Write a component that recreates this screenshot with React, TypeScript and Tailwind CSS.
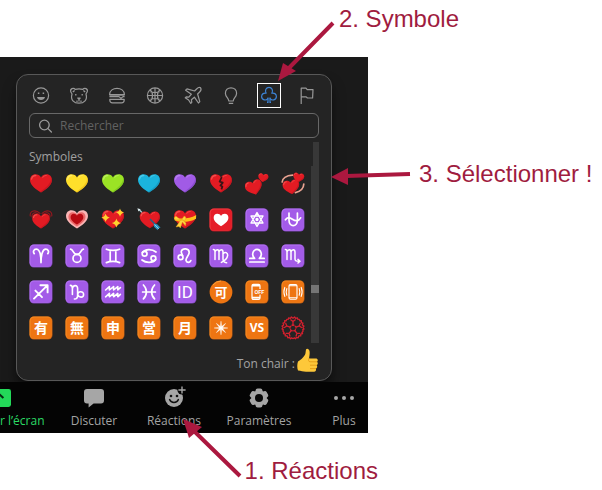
import type { ReactNode } from "react";

const HEART =
  "M12 20.6C8 17.8 1 13.8 1 8C1 4.6 3.3 2.2 6.4 2.2C8.8 2.2 11 3.4 12 5.4C13 3.4 15.2 2.2 17.6 2.2C20.7 2.2 23 4.6 23 8C23 13.8 16 17.8 12 20.6Z";

type Item = { name: string; art: ReactNode };

function Heart({ fill, shade, shine }: { fill: string; shade: string; shine: string }) {
  return (
    <g>
      <path d={HEART} fill={fill} />
      <path d="M12 20.6C16 17.8 23 13.8 23 8C23 7 22.8 6 22.4 5.2C22 12 16.6 16 10.8 19.8Z" fill={shade} opacity="0.6" />
      <path d="M2.6 7C3 4.8 4.6 3.5 6.8 3.5" fill="none" stroke={shine} strokeWidth="1.3" strokeLinecap="round" opacity="0.55" />
      <path d="M13.8 5.4C14.5 4.2 15.6 3.6 17.2 3.5" fill="none" stroke={shine} strokeWidth="1" strokeLinecap="round" opacity="0.5" />
    </g>
  );
}

const RED = { fill: "#e31b23", shade: "#b81420", shine: "#ff7a70" };

function Tile({ tone, children }: { tone: "purple" | "orange" | "red"; children: ReactNode }) {
  const c = {
    purple: { base: "#a35be8", low: "#7d45b8", high: "#b273f0" },
    orange: { base: "#ee7512", low: "#b95a14", high: "#f38a20" },
    red: { base: "#e51d28", low: "#ac1822", high: "#f03a40" },
  }[tone];
  return (
    <g>
      <rect x="0.5" y="0.5" width="23" height="23" rx="4.4" fill={c.low} />
      <rect x="0.5" y="0.5" width="22.2" height="22.2" rx="4.4" fill={c.high} />
      <rect x="1.6" y="1.5" width="21" height="21" rx="3.6" fill={c.base} />
      {children}
    </g>
  );
}

function Sign({ children }: { children: ReactNode }) {
  return (
    <Tile tone="purple">
      <g fill="none" stroke="#fff" strokeWidth="1.7" strokeLinecap="round" strokeLinejoin="round">
        {children}
      </g>
    </Tile>
  );
}

function Kanji({ children }: { children: string }) {
  return (
    <Tile tone="orange">
      <text x="12" y="17" textAnchor="middle" fontSize="14" fontWeight="700" fill="#fff" className="font-['Noto_Sans_CJK_JP',sans-serif]">
        {children}
      </text>
    </Tile>
  );
}

const star = (x: number, y: number, r: number) => (
  <path
    d={`M${x} ${y - r}Q${x + r * 0.2} ${y - r * 0.2} ${x + r} ${y}Q${x + r * 0.2} ${y + r * 0.2} ${x} ${y + r}Q${x - r * 0.2} ${y + r * 0.2} ${x - r} ${y}Q${x - r * 0.2} ${y - r * 0.2} ${x} ${y - r}Z`}
    fill="#ffd22e"
  />
);

const emojis: Item[] = [
  { name: "Cœur rouge", art: <Heart {...RED} /> },
  { name: "Cœur jaune", art: <Heart fill="#ffdf2b" shade="#eab414" shine="#fff4a0" /> },
  { name: "Cœur vert", art: <Heart fill="#9be325" shade="#72bd1c" shine="#d3f78b" /> },
  { name: "Cœur bleu", art: <Heart fill="#1bb4dc" shade="#138db8" shine="#76dcf2" /> },
  { name: "Cœur violet", art: <Heart fill="#a15be6" shade="#7d42c2" shine="#cb9cfa" /> },
  {
    name: "Cœur brisé",
    art: (
      <g>
        <Heart {...RED} />
        <path d="M12.8 5L10.6 9.6L13.8 10.6L11.4 13.6L13.4 14.6L12.4 17.4" fill="none" stroke="#3a1517" strokeWidth="1.7" strokeLinejoin="round" />
      </g>
    ),
  },
  {
    name: "Deux cœurs",
    art: (
      <g>
        <g transform="translate(-0.6 7.2) rotate(-17 8 8) scale(0.78)"><Heart {...RED} /></g>
        <g transform="translate(12.6 0.5) rotate(10 5 5) scale(0.46)"><Heart {...RED} /></g>
      </g>
    ),
  },
  {
    name: "Cœurs tournants",
    art: (
      <g>
        <path d="M11.6 3.2C5 3.4 1.2 6.6 1.2 10M22.8 12C22.6 16.4 19 19.6 14.4 20.6" fill="none" stroke="#e9a392" strokeWidth="1.7" strokeLinecap="round" />
        <g transform="translate(1 6.6) rotate(-8 8 8) scale(0.76)"><Heart {...RED} /></g>
        <g transform="translate(11.6 -0.2) rotate(10 5 5) scale(0.5)"><Heart {...RED} /></g>
      </g>
    ),
  },
  {
    name: "Cœur battant",
    art: (
      <g>
        <path d="M1.2 8C.6 2.6 6.6 1 11 5.4M22.8 8C23.4 2.6 17.4 1 13 5.4M3 9C2.6 4.8 6.4 3.4 10 6.4M21 9C21.4 4.8 17.6 3.4 14 6.4" fill="none" stroke="#97161e" strokeWidth="1.1" strokeLinecap="round" />
        <g transform="translate(2.4 4) scale(0.8)"><Heart {...RED} /></g>
      </g>
    ),
  },
  {
    name: "Cœur grandissant",
    art: (
      <g>
        <path d={HEART} fill="#fbb5b5" />
        <g transform="translate(2.6 2.5) scale(0.78)"><path d={HEART} fill="#ee6a6a" /></g>
        <g transform="translate(5 4.5) scale(0.58)"><path d={HEART} fill="#b90a12" /></g>
      </g>
    ),
  },
  {
    name: "Cœur étincelant",
    art: (
      <g>
        <Heart {...RED} />
        {star(19, 4.6, 4.2)}
        {star(4.6, 9.8, 4.2)}
        {star(15.4, 15, 4.6)}
      </g>
    ),
  },
  {
    name: "Cœur fléché",
    art: (
      <g>
        <path d="M2 1.6L7 6.6" stroke="#a9cdd5" strokeWidth="1.4" />
        <path d="M.4 .2L3.6 1.2L1.4 3.4Z" fill="#dcebee" />
        <g transform="translate(1.8 1.4) scale(0.92)"><Heart {...RED} /></g>
        <path d="M13 11L20 18" stroke="#236486" strokeWidth="1.5" />
        <path d="M16.6 15.8L17 18.8L20.8 22.2L21 20L23.6 19.8L20.2 16.2Z" fill="#2795c4" />
        <path d="M17.6 16.6L22 21" stroke="#a6e0ee" strokeWidth="0.8" />
      </g>
    ),
  },
  {
    name: "Cœur avec ruban",
    art: (
      <g>
        <Heart {...RED} />
        <path d="M.8 9.4C6 11 16 11.4 23.2 7L23 10.8C17 14.6 7 14.4 1.8 12.6Z" fill="#ffc21a" />
        <path d="M7.6 11.8L3.4 8.4C1.4 7.8 1 10 2.4 12ZM8.6 11.8L11 8.2C13 8 13.4 10.4 12 12.4ZM7.4 12.4L3 19L6 18.4L7.4 20L9.4 14L12.4 18L13 15L9.6 12Z" fill="#ffd53d" stroke="#e09a12" strokeWidth="0.4" />
      </g>
    ),
  },
  {
    name: "Décoration cœur",
    art: (
      <Tile tone="red">
        <g transform="translate(4 4.4) scale(0.67)"><path d={HEART} fill="#fff" /></g>
      </Tile>
    ),
  },
  {
    name: "Étoile à six branches",
    art: (
      <Sign>
        <path d="M12 4.6L18 15H6ZM12 18.4L6 8H18Z" strokeWidth="1.4" />
        <circle cx="12" cy="11.5" r="0.8" />
      </Sign>
    ),
  },
  { name: "Serpentaire", art: <Sign><path d="M8 5V12C8 19.4 16.4 19.4 16.4 12V5M4.4 11.8C6.6 8.4 8.8 9.4 11.4 11.2C14.6 13.4 17.6 13.4 19.6 9.8" /></Sign> },
  { name: "Bélier", art: <Sign><path d="M5.2 9.6C3.6 7.6 5 5.2 7.2 5.2C10.4 5.2 12 11 12 18.6C12 11 13.6 5.2 16.8 5.2C19 5.2 20.4 7.6 18.8 9.6" /></Sign> },
  { name: "Taureau", art: <Sign><circle cx="12" cy="14.4" r="4" /><path d="M5.6 5.2C8.4 5.4 7.8 10.4 12 10.4C16.2 10.4 15.6 5.4 18.4 5.2" /></Sign> },
  { name: "Gémeaux", art: <Sign><path d="M5.4 5.2C9 6.8 15 6.8 18.6 5.2M5.4 18.6C9 17 15 17 18.6 18.6M9.2 6.6V17.2M14.8 6.6V17.2" /></Sign> },
  { name: "Cancer", art: <Sign><circle cx="7.6" cy="9.8" r="2.4" /><circle cx="16.4" cy="14.2" r="2.4" /><path d="M5.4 8.6C8 4.8 15 4.8 19 8M18.6 15.4C16 19.2 9 19.2 5 16" /></Sign> },
  { name: "Lion", art: <Sign><circle cx="7.6" cy="13.2" r="2.4" /><path d="M9.6 12C9.2 9.8 7.8 9 8.4 7C9.6 3.8 16 4 16.2 8.2C16.2 11.6 12.6 13.4 13 16.4C13.4 19 16.8 18.8 17.8 16.6" /></Sign> },
  { name: "Vierge", art: <Sign><path d="M4.4 5.6C5.8 5.6 6 6.4 6 7.8V15.6M6 7.8C6.8 5 10 5 10 8V15.6M10 7.8C10.8 5 14 5 14 8V15C14 17 15.4 18.4 17.6 18.8M14 9.8C16 7.2 19 8.8 18.6 11.6C18.2 14.6 15.4 16.8 12.4 18.4" strokeWidth="1.5" /></Sign> },
  { name: "Balance", art: <Sign><path d="M4.8 18H19.2M4.8 14.4H9.6C6 11 8 5.4 12 5.4C16 5.4 18 11 14.4 14.4H19.2" /></Sign> },
  { name: "Scorpion", art: <Sign><path d="M4.4 5.6C5.8 5.6 6 6.4 6 7.8V15.6M6 7.8C6.8 5 10 5 10 8V15.6M10 7.8C10.8 5 14 5 14 8V15C14 16.8 15.2 17.4 18.6 17.2M17 15.4L19 17.2L17 19" strokeWidth="1.5" /></Sign> },
  { name: "Sagittaire", art: <Sign><path d="M5 18.6L18.4 5.4M11.4 5.2H18.6V12.4M6.4 10.6L13 17.2" strokeWidth="1.9" /></Sign> },
  { name: "Capricorne", art: <Sign><path d="M5.4 5.4C7.2 5.4 7.4 7 7.4 8.6V14.4M7.4 8.6C8 4.8 12.6 4.4 12.6 8.6V15.4C12.6 17.8 11.4 19 9.4 19M12.6 14.6C12.8 10.8 18.6 10.8 18.6 14.4C18.6 18 13.8 18 12.6 14.6" strokeWidth="1.6" /></Sign> },
  { name: "Verseau", art: <Sign><path d="M4.6 10L8.4 6.6V10L12.6 6.6V10L16.8 6.6V10L19.4 7.6M4.6 16.8L8.4 13.4V16.8L12.6 13.4V16.8L16.8 13.4V16.8L19.4 14.4" strokeWidth="1.6" /></Sign> },
  { name: "Poissons", art: <Sign><path d="M6.4 5C10.4 8.8 10.4 15 6.4 18.8M17.6 5C13.6 8.8 13.6 15 17.6 18.8M5.6 12H18.4" /></Sign> },
  {
    name: "Identité",
    art: (
      <Tile tone="purple">
        <text x="12" y="18" textAnchor="middle" fontSize="17" fill="#fff" className="font-['Roboto',sans-serif]">ID</text>
      </Tile>
    ),
  },
  {
    name: "Acceptable",
    art: (
      <g>
        <circle cx="12" cy="12" r="11.4" fill="#ee7512" />
        <path d="M4 5A11 11 0 0 1 12 1" stroke="#f9a23c" fill="none" />
        <text x="12" y="17" textAnchor="middle" fontSize="13" fontWeight="700" fill="#fff" className="font-['Noto_Sans_CJK_JP',sans-serif]">可</text>
      </g>
    ),
  },
  {
    name: "Téléphone éteint",
    art: (
      <Tile tone="orange">
        <rect x="7" y="4.4" width="8" height="15" rx="1.4" fill="none" stroke="#fff" strokeWidth="1.2" />
        <path d="M7 5.6H15M7 17.6H15" stroke="#fff" strokeWidth="1.8" />
        <rect x="9" y="9" width="10.6" height="5.6" fill="#ee7512" />
        <text x="14.4" y="14" textAnchor="middle" fontSize="5.5" fontWeight="700" fill="#fff" className="font-['Roboto',sans-serif]">OFF</text>
      </Tile>
    ),
  },
  {
    name: "Mode vibreur",
    art: (
      <Tile tone="orange">
        <g fill="none" stroke="#fff" strokeWidth="1.1" strokeLinecap="round">
          <rect x="8" y="4.6" width="8" height="14.6" rx="1.4" />
          <path d="M8.4 5.8H15.6M8.4 17.8H15.6M5.8 8.6C5 10.8 5 13 5.8 15.2M3.8 7.4C2.6 10.4 2.6 13.4 3.8 16.4M18.2 8.6C19 10.8 19 13 18.2 15.2M20.2 7.4C21.4 10.4 21.4 13.4 20.2 16.4" />
        </g>
      </Tile>
    ),
  },
  { name: "Payant", art: <Kanji>有</Kanji> },
  { name: "Gratuit", art: <Kanji>無</Kanji> },
  { name: "Candidature", art: <Kanji>申</Kanji> },
  { name: "Ouvert", art: <Kanji>営</Kanji> },
  { name: "Mensuel", art: <Kanji>月</Kanji> },
  {
    name: "Étoile à huit branches",
    art: (
      <Tile tone="orange">
        <path d="M12 5.2L12.6 10.4L16.6 7.4L13.6 11.4L18.8 12L13.6 12.6L16.6 16.6L12.6 13.6L12 18.8L11.4 13.6L7.4 16.6L10.4 12.6L5.2 12L10.4 11.4L7.4 7.4L11.4 10.4Z" fill="#fff" stroke="#fff" strokeWidth="0.4" />
      </Tile>
    ),
  },
  {
    name: "Versus",
    art: (
      <Tile tone="orange">
        <text x="12" y="16" textAnchor="middle" fontSize="12" fontWeight="700" fill="#fff" className="font-['Open_Sans',sans-serif]">VS</text>
      </Tile>
    ),
  },
  {
    name: "Fleur blanche",
    art: (
      <g fill="none" stroke="#d5202e" strokeWidth="1.3" strokeLinejoin="round">
        {[0, 72, 144, 216, 288].map((a) => (
          <g key={a} transform={`rotate(${a} 12 12)`}>
            <path d="M12 8.8V5.2M9.4 3.4L12 5.4L14.6 3.4M10.6 9.6L12 8.6L13.4 9.6" />
            <path d="M5.6 3.4L7.4 3.2L7.6 1.8L9.4 2.4L10.4 1L12 2.2L13.6 1L14.6 2.4L16.4 1.8L16.6 3.2L18.4 3.4" />
          </g>
        ))}
      </g>
    ),
  },
];

const categories: Item[] = [
  {
    name: "Émoticônes",
    art: (
      <>
        <circle cx="12" cy="12.5" r="7.6" />
        <path d="M8 14H16C15.6 18 8.4 18 8 14Z" fill="currentColor" stroke="none" />
        <path d="M9.6 9.4V11M14.4 9.4V11" strokeWidth="1.5" />
      </>
    ),
  },
  {
    name: "Animaux",
    art: (
      <>
        <path d="M8.2 6.4C6.4 4 2.8 6 3.8 8.8C4.2 9.8 5 10.2 5 11.2C3.2 16.8 7 20.2 12 20.2C17 20.2 20.8 16.8 19 11.2C19 10.2 19.8 9.8 20.2 8.8C21.2 6 17.6 4 15.8 6.4C13.4 5.8 10.6 5.8 8.2 6.4Z" />
        <path d="M5.8 9L7.6 7.4M18.2 9L16.4 7.4M8.8 11V12.6M15.2 11V12.6" strokeWidth="1.3" />
        <path d="M10.8 15H13.2L12 16.4ZM12 16.4V18.6M10 19V17.4M14 19V17.4" />
      </>
    ),
  },
  {
    name: "Nourriture",
    art: (
      <>
        <path d="M4.6 11.6C4.6 3.2 19.4 3.2 19.4 11.6ZM4.4 13.6H14L16 15.4L18 13.6H19.6M4.8 16.4H19.2V17C19.2 18.8 18.2 19.8 16.6 19.8H7.4C5.8 19.8 4.8 18.8 4.8 17Z" />
        <path d="M4.4 11.8H19.6" strokeWidth="1.6" />
      </>
    ),
  },
  {
    name: "Activités",
    art: (
      <>
        <circle cx="12" cy="12.5" r="7.6" />
        <path d="M12 5V20M4.4 12.5H19.6M7 7C10.4 9 10.4 16 7 18M17 7C13.6 9 13.6 16 17 18M7.4 8.6C10 9.6 14 9.6 16.6 8.6M7.4 16.4C10 15.4 14 15.4 16.6 16.4" />
      </>
    ),
  },
  {
    name: "Voyages",
    art: (
      <path d="M19.6 4.8C18.4 4 16.8 4.8 15.6 6L13.6 8L6 5.8L4.6 7.2L10.4 11.2L7.8 14.2L5.2 13.8L4.2 14.8L7.6 17L9.8 20.4L10.8 19.4L10.4 16.8L13.4 14.2L17.4 20L18.8 18.6L16.6 11L18.6 9C19.8 7.8 20.4 6 19.6 4.8Z" />
    ),
  },
  {
    name: "Objets",
    art: <path d="M9.8 18C9.8 15 6.4 14 6.4 10.2C6.4 7 8.8 4.8 12 4.8C15.2 4.8 17.6 7 17.6 10.2C17.6 14 14.2 15 14.2 18ZM9.8 20.4H14.2" />,
  },
  {
    name: "Symboles",
    art: (
      <>
        <path d="M11 15.4C9.6 18 4.6 17.4 4.6 13.6C4.6 10.8 7 9.6 9.2 10.2C7.4 7.4 9.2 4.4 12 4.4C14.8 4.4 16.6 7.4 14.8 10.2C17 9.6 19.4 10.8 19.4 13.6C19.4 17.4 14.4 18 13 15.4" />
        <path d="M11 14.4V19.4H10M13 14.4V19.4H14" />
      </>
    ),
  },
  { name: "Drapeaux", art: <path d="M6.2 21V5.2H11L12.2 6.6H18L17.6 15H12.4L11.2 13.8H6.2" /> },
];

const tools: Item[] = [
  {
    name: "Discuter",
    art: <path d="M5 3H19Q22 3 22 6V14.6Q22 17.6 19 17.6H11.6L6.6 21.6V17.6H5Q2 17.6 2 14.6V6Q2 3 5 3Z" fill="currentColor" />,
  },
  {
    name: "Réactions",
    art: (
      <>
        <circle cx="12" cy="12" r="9" fill="currentColor" />
        <circle cx="20" cy="4" r="4.6" fill="#040404" />
        <path d="M20 .4V7.6M16.4 4H23.6" stroke="currentColor" strokeWidth="1.4" />
        <circle cx="9" cy="10" r="1.3" fill="#111" />
        <circle cx="15" cy="10" r="1.3" fill="#111" />
        <path d="M7.6 13.6C9 17.4 15 17.4 16.4 13.6" fill="none" stroke="#111" strokeWidth="1.5" strokeLinecap="round" />
      </>
    ),
  },
  {
    name: "Paramètres",
    art: (
      <>
        <g fill="currentColor">
          <circle cx="12" cy="12" r="7.8" />
          {[0, 60, 120, 180, 240, 300].map((a) => (
            <rect key={a} x="8.6" y="2.4" width="6.8" height="5" rx="2" transform={`rotate(${a} 12 12)`} />
          ))}
        </g>
        <circle cx="12" cy="12" r="4" fill="#080808" />
      </>
    ),
  },
  {
    name: "Plus",
    art: (
      <g fill="currentColor">
        <circle cx="4" cy="12" r="2" />
        <circle cx="12" cy="12" r="2" />
        <circle cx="20" cy="12" r="2" />
      </g>
    ),
  },
];

function ThumbsUp() {
  return (
    <svg viewBox="0 0 22 25" className="h-[25px] w-[22px] shrink-0" aria-hidden="true">
      <path d="M1 13.4C3.4 12.4 6.4 9.6 8 6.8C8.8 5.2 8.6 3 9 1.6C9.8 .2 12.2 .8 12.6 3.4C12.9 5.6 12.4 8.2 12 10.4H18.8C21 10.4 21.4 13 19.8 13.8C21.4 14.6 21 16.8 19.6 17.2C20.8 18.2 20.2 20.2 18.8 20.6C19.6 22 18.6 23.8 17 23.8H9C6 23.8 4 23 1 22.6C0 19.6 0 16.4 1 13.4Z" fill="#fdc83a" />
      <path d="M12 10.4C11 12 11.4 13.6 13 13.8H19.8M13.4 17.2H19.6M13.4 20.6H18.8" fill="none" stroke="#e39a14" strokeWidth="0.9" strokeLinecap="round" />
    </svg>
  );
}

const labelText = "font-['Liberation_Sans',Arial,sans-serif] text-2xl whitespace-nowrap text-[#9f1c40]";

export default function App() {
  return (
    <main className="relative min-h-screen overflow-hidden bg-white font-['Open_Sans','Noto_Sans',sans-serif] text-xs text-[#a3a3a3]">
      <p className={`flex h-[57px] justify-end pt-[3px] pr-[143px] ${labelText}`}>2. Symbole</p>

      <div className="flex">
        <section className="min-w-0 flex-1 bg-[#1a1a1a] pt-[17px]">
          <div className="mr-9 ml-4 rounded-xl border border-[#585858] bg-[#242424] px-3 pt-2 shadow-lg shadow-black/60">
            <nav className="flex justify-between">
              {categories.map((c) => (
                <button
                  key={c.name}
                  aria-label={c.name}
                  className={
                    c.name === "Symboles"
                      ? "h-[25px] w-6 text-[#3d84d6] outline outline-1 -outline-offset-1 outline-white"
                      : "h-[25px] w-6 text-[#989898]"
                  }
                >
                  <svg viewBox="0 0 24 25" className="size-full" fill="none" stroke="currentColor" strokeWidth="1.2" strokeLinejoin="round">
                    {c.art}
                  </svg>
                </button>
              ))}
            </nav>

            <label className="mt-[5px] flex h-[25px] items-center gap-2 rounded-md border border-[#686868] pl-2">
              <svg viewBox="0 0 14 14" className="size-[14px] shrink-0" fill="none" stroke="#9a9a9a" strokeWidth="1.3" strokeLinecap="round">
                <circle cx="6.4" cy="6" r="4.8" />
                <path d="M10 9.6L13.4 13" />
              </svg>
              <input
                type="text"
                aria-label="Rechercher"
                placeholder="Rechercher"
                className="min-w-0 flex-1 bg-transparent pt-px outline-none placeholder:text-[#626262]"
              />
            </label>

            <div className="mt-1 flex justify-between">
              <div className="min-w-0 flex-1 pr-[6px]">
                <h2 className="flex h-[30px] items-center text-[#a0a0a0]">Symboles</h2>
                <div className="grid grid-cols-8 gap-3">
                  {emojis.map((e) => (
                    <button key={e.name} aria-label={e.name} className="h-6">
                      <svg viewBox="0 0 24 24" className="mx-auto size-6">{e.art}</svg>
                    </button>
                  ))}
                </div>
              </div>
              <div className="flex w-2 shrink-0 flex-col items-end" aria-hidden="true">
                <div className="h-6 w-[6px] bg-[#383838]" />
                <div className="flex h-[177px] w-2 flex-col justify-end bg-[#383838] pb-[50px]">
                  <div className="h-2 bg-[#757575]" />
                </div>
              </div>
            </div>

            <div className="flex h-[37px] items-start justify-end gap-[2px] pt-[5px]">
              <span className="pt-2">Ton chair :</span>
              <ThumbsUp />
            </div>
          </div>

          <div className="mt-px grid h-[51px] grid-cols-[1fr_80px_80px_90px_64px] bg-[#040404] pt-1">
            <button className="flex min-w-0 flex-col items-start gap-[3px] text-[#2bd965]">
              <svg viewBox="0 0 12 24" className="h-6 w-3">
                <path d="M0 3H8.6Q11 3 11 5.4V18.6Q11 21 8.6 21H0Z" fill="#23d959" />
                <path d="M-4 12L-.4 8.4L3.4 12" fill="none" stroke="#062b11" strokeWidth="2" />
              </svg>
              <span className="whitespace-nowrap">r l’écran</span>
            </button>
            {tools.map((t) => (
              <button key={t.name} className={t.name === "Plus" ? "flex flex-col items-center gap-[3px] pl-4" : "flex flex-col items-center gap-[3px]"}>
                <svg viewBox="0 0 24 24" className="size-6 text-[#a6a6a6]">
                  {t.art}
                </svg>
                <span>{t.name}</span>
              </button>
            ))}
          </div>
        </section>

        <p className={`w-[234px] shrink-0 pt-[101px] pl-[51px] ${labelText}`}>3. Sélectionner !</p>
      </div>

      <p className={`flex justify-end pt-[22px] pr-[224px] ${labelText}`}>1. Réactions</p>

      <svg viewBox="0 0 602 490" className="pointer-events-none absolute top-0 right-0 h-[490px] w-[602px]" fill="#ab183f" stroke="#ab183f" aria-hidden="true">
        <g strokeWidth="4">
          <path d="M333 23L288 69M410 174L346 176M240 476L194 431" />
        </g>
        <g stroke="none">
          <path d="M278 81L283 63L296 71Z" />
          <path d="M331 177L348 168V185Z" />
          <path d="M183 419L202 427L189 438Z" />
        </g>
      </svg>
    </main>
  );
}
